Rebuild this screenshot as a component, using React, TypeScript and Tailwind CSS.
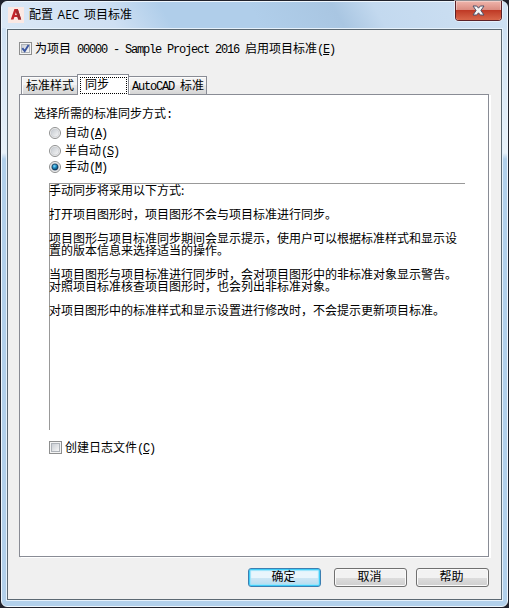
import type { ReactNode } from "react";

// Half-width text: every latin glyph takes a 6px cell
function Latin({ children }: { children: ReactNode }) {
  return (
    <span className="whitespace-pre font-['Liberation_Mono',monospace] text-[12px] tracking-[-1.2px]">
      {children}
    </span>
  );
}

function AccessKey({ letter }: { letter: string }) {
  return (
    <Latin>
      (<u className="underline-offset-1">{letter}</u>)
    </Latin>
  );
}

function Checkbox({ checked }: { checked?: boolean }) {
  return (
    <span className="flex size-[13px] shrink-0 border border-[#8e8f8f] bg-[#f4f4f4] p-px">
      <span className="flex size-[9px] border border-[#aeb3b9] bg-linear-to-br from-[#cbcfd5] to-[#f6f6f6]">
        {checked && (
          <svg viewBox="0 0 9 9" className="-m-px size-[9px] shrink-0 overflow-visible">
            <path d="M1.3 4.2 L3.7 7.2 L7.6 1" fill="none" stroke="#3b56a0" strokeWidth="1.9" />
          </svg>
        )}
      </span>
    </span>
  );
}

function Radio({ checked }: { checked?: boolean }) {
  return (
    <svg viewBox="0 0 12 12" className="size-3 shrink-0">
      <defs>
        <linearGradient id="radio-off" x1="0" y1="0" x2="1" y2="1">
          <stop offset="0" stopColor="#c3c8ce" />
          <stop offset="1" stopColor="#f8f8f8" />
        </linearGradient>
        <radialGradient id="radio-on" cx="0.4" cy="0.35" r="0.65">
          <stop offset="0" stopColor="#7fdcff" />
          <stop offset="0.5" stopColor="#1c87bd" />
          <stop offset="1" stopColor="#0b3c63" />
        </radialGradient>
      </defs>
      <circle cx="6" cy="6" r="5.5" fill="#f4f4f4" stroke="#8e8f8f" />
      <circle cx="6" cy="6" r="4" fill="url(#radio-off)" stroke="#c4c8cc" strokeWidth="0.6" />
      {checked && <circle cx="6" cy="6" r="3.1" fill="url(#radio-on)" stroke="#12324f" strokeWidth="0.7" />}
    </svg>
  );
}

function Button({ label, primary }: { label: string; primary?: boolean }) {
  return (
    <button
      className={
        primary
          ? "h-[19px] w-[73px] rounded-[3px] border border-[#3c7fb1] bg-linear-to-b from-[#e9f5fc] from-50% via-[#cfe7f5] via-50% to-[#b5dbee] pb-px leading-[16px] shadow-[inset_0_0_0_1px_#3fcdf8,inset_0_0_1px_2px_#9be4fb]"
          : "h-[19px] w-[73px] rounded-[3px] border border-[#707070] bg-linear-to-b from-[#f2f2f2] from-50% via-[#dddddd] via-50% to-[#cfcfcf] pb-px leading-[16px] shadow-[inset_0_0_0_1px_#fafafa]"
      }
    >
      <span className="relative -left-px -top-px">{label}</span>
    </button>
  );
}

const modes = [
  { label: "自动", letter: "A", className: "h-[18px]" },
  { label: "半自动", letter: "S", className: "h-[17px]" },
  { label: "手动", letter: "M", className: "h-4", checked: true },
];

const description = [
  "手动同步将采用以下方式:",
  "",
  "打开项目图形时，项目图形不会与项目标准进行同步。",
  "",
  "项目图形与项目标准同步期间会显示提示，使用户可以根据标准样式和显示设",
  "置的版本信息来选择适当的操作。",
  "",
  "当项目图形与项目标准进行同步时，会对项目图形中的非标准对象显示警告。",
  "对照项目标准核查项目图形时，也会列出非标准对象。",
  "",
  "对项目图形中的标准样式和显示设置进行修改时，不会提示更新项目标准。",
];

function TitleBar() {
  return (
    <div className="-mx-1 flex h-[26px] items-start rounded-t-[5px] bg-[linear-gradient(60deg,#dbe8f6_0%,#cfe0f3_22%,#b0ceea_33%,#b0ceea_50%,#a9c6e2_66%,#c3d9ef_74%,#cfe1f3_100%)] pl-1.5 pr-[5px]">
      <div className="mt-[5px] flex size-4 items-center justify-center bg-[#fbe9e4]">
        <svg viewBox="0 0 16 16" className="size-4">
          <path d="M2.8 12.5 L6.4 2 H9.8 L13.2 12.5 H10.2 L9.5 10.1 H6.4 L5.5 12.5 Z M7 7.9 H9 L8 5 Z" fill="#c4242b" fillRule="evenodd" />
          <path d="M9.8 2 L13.2 12.5 H10.2 L7.9 4.6 Z" fill="#9c2a2d" />
        </svg>
      </div>
      <h1 className="ml-[5px] mt-1 grow font-['Open_Sans','Noto_Sans_CJK_SC',sans-serif] text-xs leading-[18px] [word-spacing:1.5px]">
        配置 AEC 项目标准
      </h1>
      <button className="-mt-px flex h-5 w-[47px] rounded-b-[4px] border border-t-0 border-[#5b2128] bg-[#eba9a0] shadow-[0_0_0_1px_#ffffff80]">
        <span className="flex h-full w-full items-center justify-center rounded-b-[3px] bg-linear-to-b from-[#efb5ac] from-0% via-[#d9897e] via-50% to-[#d9897e] to-50% shadow-[inset_0_0_0_1px_#ffffff55]">
          <span className="flex h-full w-full items-center justify-center rounded-b-[3px] bg-linear-to-b from-transparent from-50% via-[#bf3a26] via-50% to-[#d8664a]">
            <svg viewBox="0 0 13 11" className="h-[11px] w-[13px]">
              <path
                d="M1 1 H4.7 L6.5 3.2 L8.3 1 H12 L8.9 5.5 L12 10 H8.3 L6.5 7.8 L4.7 10 H1 L4.1 5.5 Z"
                fill="#f7f7f7"
                stroke="#4d5068"
              />
            </svg>
          </span>
        </span>
      </button>
    </div>
  );
}

function Tabs() {
  return (
    <div className="mb-[-1px] ml-0.5 flex h-[21px] items-end">
      <div className="h-[19px] w-[57px] border border-[#898c95] bg-linear-to-b from-[#f3f3f3] from-50% via-[#e9e9e9] via-50% to-[#d5d5d5] pl-1 leading-[16px] shadow-[inset_1px_1px_0_#fcfcfc]">
        标准样式
      </div>
      <div className="relative -ml-px h-[21px] w-[52px] border border-b-0 border-[#898c95] bg-white px-0.5 pt-0.5">
        <div className="h-[17px] w-[47px] border border-dotted border-black pl-1 leading-[12px]">同步</div>
      </div>
      <div className="-ml-px h-[19px] w-[79px] border border-[#898c95] bg-linear-to-b from-[#f3f3f3] from-50% via-[#e9e9e9] via-50% to-[#d5d5d5] pl-[3px] leading-[16px] shadow-[inset_1px_1px_0_#fcfcfc]">
        <Latin>AutoCAD </Latin>标准
      </div>
    </div>
  );
}

export default function App() {
  return (
    <div className="h-[608px] w-[509px] overflow-hidden bg-[#20222c] p-px font-['Noto_Sans_CJK_SC',sans-serif] text-xs text-black">
      <div className="flex h-[606px] w-[507px] flex-col rounded-[6px] border border-[#eef6fd] bg-linear-to-b from-[#cfe1f3] from-5% via-[#e8f1f9] via-25% to-[#b2d0eb] to-26% px-1">
        <TitleBar />
        <main className="flex h-[573px] w-[497px] flex-col border border-[#e6f1fb]">
          <div className="flex grow flex-col border border-[#5b6872] bg-[#f0f0f0] pl-[11px]">
            <label className="mt-3 flex h-[13px] items-center">
              <Checkbox checked />
              <span className="ml-[3px] whitespace-nowrap leading-[13px]">
                为项目<Latin> 00000 - Sample Project 2016 </Latin>启用项目标准
                <AccessKey letter="E" />
              </span>
            </label>

            <div className="mt-[19px]">
              <Tabs />
              <section className="h-[463px] w-[470px] border border-[#898c95] bg-white pl-[14px] pt-[9px] shadow-[2px_1px_0_#fff]">
                <p className="h-5 leading-[18px]">
                  选择所需的标准同步方式<Latin>:</Latin>
                </p>
                <div className="pl-[15px]">
                  {modes.map((mode) => (
                    <label key={mode.letter} className={`flex items-center ${mode.className}`}>
                      <Radio checked={mode.checked} />
                      <span className="ml-1 leading-4">
                        {mode.label}
                        <AccessKey letter={mode.letter} />
                      </span>
                    </label>
                  ))}
                  <div className="mt-2 h-[247px] w-[416px] border-l border-t border-[#999]">
                    {description.map((line, i) => (
                      <p key={i} className="-ml-px h-3 whitespace-nowrap leading-3">
                        {line}
                      </p>
                    ))}
                  </div>
                  <label className="mt-[11px] flex h-[13px] items-center">
                    <Checkbox />
                    <span className="ml-[3px] leading-[13px]">
                      创建日志文件
                      <AccessKey letter="C" />
                    </span>
                  </label>
                </div>
              </section>
            </div>

            <div className="mt-[11px] flex pl-[229px]">
              <Button label="确定" primary />
              <div className="ml-[13px] flex gap-[9px]">
                <Button label="取消" />
                <Button label="帮助" />
              </div>
            </div>
          </div>
        </main>
      </div>
    </div>
  );
}
